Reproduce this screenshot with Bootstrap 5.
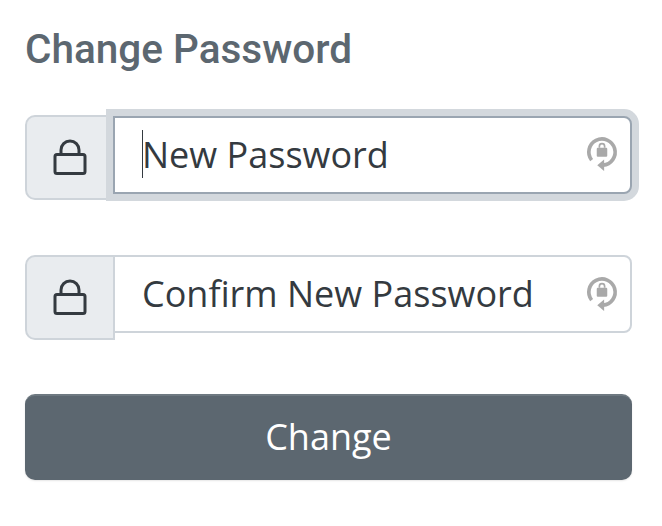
<!DOCTYPE html>
<html lang="en">
<head>
<meta charset="utf-8">
<title>Change Password</title>
<link href="https://cdn.jsdelivr.net/npm/bootstrap@5.3.0/dist/css/bootstrap.min.css" rel="stylesheet">
<style>
html,body{height:100%}
body{background:#fff;font-family:"Open Sans","Liberation Sans",sans-serif;overflow:hidden}
.pw-wrap{padding:27px 30px 0 25px}
.pw-title{font-family:Roboto,"Liberation Sans",sans-serif;font-weight:500;font-size:40.5px;line-height:44px;color:#5c6770;margin:0 0 44px}
.pw-group{align-items:flex-start;flex-wrap:nowrap;margin-bottom:55px}
.pw-group-last{margin-bottom:54px}
.pw-addon{flex:none;width:90px;height:85px;justify-content:center;background:#e9ecef;border:2px solid #ced4da;border-radius:10px 0 0 10px;padding:0}
.pw-field{position:relative;flex:1 1 auto;min-width:0;margin-left:-2px!important}
.pw-input.form-control{height:78px;font-size:36px;line-height:48px;color:#343a40;padding:0 60px 1px 27px;border:2px solid #ced4da;border-radius:0 8px 8px 0;box-shadow:none}
.pw-input.form-control::placeholder{color:#343a40;opacity:1}
.pw-input.pw-focus.form-control{border-color:#9aa5b1;box-shadow:0 0 0 7px #d3d8dd;margin-top:1px}
.pw-manager{position:absolute;right:12px;top:15px;width:36px;height:42px}
.pw-caret{position:absolute;left:29px;top:15px;width:1px;height:48px;background:#343a40}
.pw-focused{z-index:3}
.pw-btn.btn{display:block;width:100%;height:86px;background:#5c6770;border:0;border-top:2px solid #6e7981;border-radius:10px;color:#fff;font-size:36px;padding:0 0 2px;box-shadow:0 1px 2px rgba(0,0,0,.1)}
</style>
</head>
<body>
<div class="pw-wrap">
  <h1 class="pw-title">Change Password</h1>
  <form>
    <div class="input-group pw-group">
      <span class="input-group-text pw-addon">
        <svg width="34" height="38" viewBox="0 0 34 38" fill="none" stroke="#343a40" stroke-width="3" aria-hidden="true"><path d="M8 15.5V11a9 9 0 0 1 18 0v4.500"/><rect x="2" y="15.500" width="30" height="19" rx="2"/></svg>
      </span>
      <div class="pw-field pw-focused">
        <input class="form-control pw-input pw-focus" type="password" placeholder="New Password">
        <span class="pw-caret"></span>
        <svg class="pw-manager" viewBox="0 0 34 40" aria-hidden="true"><path d="M7.100 28.700A12.500 12.500 0 1 1 18 33.500" fill="none" stroke="#a9a9a9" stroke-width="3.500"/><path d="M12.500 33.500l6.500-5.500v11z" fill="#a9a9a9"/><rect x="12" y="17" width="10" height="8.500" rx="1" fill="#a9a9a9"/><path d="M14.500 17v-1.500a2.500 2.500 0 0 1 5 0V17" fill="none" stroke="#a9a9a9" stroke-width="1.600"/></svg>
      </div>
    </div>
    <div class="input-group pw-group pw-group-last">
      <span class="input-group-text pw-addon">
        <svg width="34" height="38" viewBox="0 0 34 38" fill="none" stroke="#343a40" stroke-width="3" aria-hidden="true"><path d="M8 15.5V11a9 9 0 0 1 18 0v4.500"/><rect x="2" y="15.500" width="30" height="19" rx="2"/></svg>
      </span>
      <div class="pw-field">
        <input class="form-control pw-input" type="password" placeholder="Confirm New Password">
        <svg class="pw-manager" viewBox="0 0 34 40" aria-hidden="true"><path d="M7.100 28.700A12.500 12.500 0 1 1 18 33.500" fill="none" stroke="#a9a9a9" stroke-width="3.500"/><path d="M12.500 33.500l6.500-5.500v11z" fill="#a9a9a9"/><rect x="12" y="17" width="10" height="8.500" rx="1" fill="#a9a9a9"/><path d="M14.500 17v-1.500a2.500 2.500 0 0 1 5 0V17" fill="none" stroke="#a9a9a9" stroke-width="1.600"/></svg>
      </div>
    </div>
    <button type="button" class="btn pw-btn">Change</button>
  </form>
</div>
<script src="https://cdn.jsdelivr.net/npm/bootstrap@5.3.0/dist/js/bootstrap.bundle.min.js"></script>
</body>
</html>
